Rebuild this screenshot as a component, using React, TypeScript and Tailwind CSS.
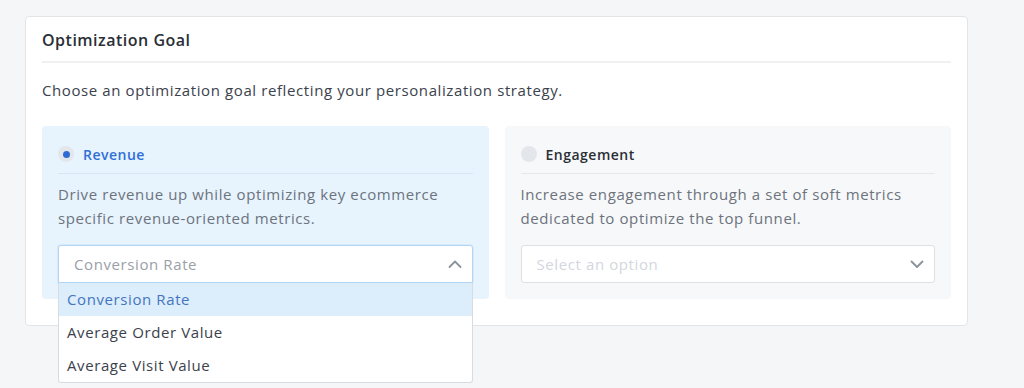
const options = ["Conversion Rate", "Average Order Value", "Average Visit Value"];

function Chevron({ up }: { up?: boolean }) {
  return (
    <svg width="14" height="14" viewBox="0 0 14 14" className="text-[#8a929d]">
      <path
        d={up ? "M1.5 10 L7 4.5 L12.5 10" : "M1.5 4.5 L7 10 L12.5 4.5"}
        fill="none"
        stroke="currentColor"
        strokeWidth="1.8"
        strokeLinecap="round"
        strokeLinejoin="round"
      />
    </svg>
  );
}

function Radio({ checked }: { checked: boolean }) {
  return (
    <span className="flex h-4 w-4 shrink-0 items-center justify-center rounded-full bg-[#e3e6eb]">
      {checked && <span className="h-[7px] w-[7px] rounded-full bg-[#2f6bd2]" />}
    </span>
  );
}

function GoalPanel({
  label,
  description,
  active,
  children,
}: {
  label: string;
  description: string[];
  active: boolean;
  children: React.ReactNode;
}) {
  return (
    <div
      className={`flex flex-col rounded-[4px] px-4 pt-4 pb-4 ${
        active ? "bg-[#e7f3fd]" : "bg-[#f7f8f9]"
      }`}
    >
      <div className="flex h-6 items-center gap-[9px]">
        <Radio checked={active} />
        <span
          className={`text-[14px] font-semibold tracking-[0.5px] ${
            active ? "text-[#2f6fd6]" : "text-[#2b2f36]"
          }`}
        >
          {label}
        </span>
      </div>
      <div className={`mt-[7px] h-px ${active ? "bg-[#d6e6f4]" : "bg-[#e6e8eb]"}`} />
      <p className="mt-[8px] text-[15px] leading-6 tracking-[0.6px] text-[#6c737d]">
        {description.map((line) => (
          <span key={line} className="block">
            {line}
          </span>
        ))}
      </p>
      <div className="mt-[15px]">{children}</div>
    </div>
  );
}

export default function App() {
  return (
    <div
      className="min-h-[388px] bg-[#f5f6f7] pl-[25px] pt-4"
      style={{ fontFamily: '"Open Sans", "Liberation Sans", sans-serif' }}
    >
      <div className="w-[943px] rounded-[4px] border border-[#e2e5e8] bg-white px-4 pt-[11px] pb-[26px]">
        <h2 className="border-b-2 border-[#eff0f2] pb-[9px] text-[16px] leading-6 font-semibold tracking-[0.5px] text-[#2a2e35]">
          Optimization Goal
        </h2>
        <p className="mt-[15px] text-[15px] leading-6 tracking-[0.6px] text-[#3b424c]">
          Choose an optimization goal reflecting your personalization strategy.
        </p>
        <div className="mt-6 grid grid-cols-2 gap-4">
          <GoalPanel
            label="Revenue"
            active
            description={[
              "Drive revenue up while optimizing key ecommerce",
              "specific revenue-oriented metrics.",
            ]}
          >
            <div className="relative">
              <div className="flex h-[38px] items-center justify-between rounded-t-[3px] border border-[#b3d5f5] bg-white pl-[15px] pr-[10px] shadow-[0_0_0_1px_#d9ebfb]">
                <span className="text-[15px] tracking-[0.6px] text-[#9aa0a8]">Conversion Rate</span>
                <Chevron up />
              </div>
              <ul className="absolute top-[38px] right-0 left-0 z-10 rounded-b-[3px] border border-t-0 border-[#d8dce1] bg-white">
                {options.map((o, i) => (
                  <li
                    key={o}
                    className={`flex h-[33px] items-center px-2 text-[15px] tracking-[0.6px] ${
                      i === 0 ? "bg-[#dcedfc] text-[#4476c0]" : "text-[#3b424c]"
                    }`}
                  >
                    {o}
                  </li>
                ))}
              </ul>
            </div>
          </GoalPanel>
          <GoalPanel
            label="Engagement"
            active={false}
            description={[
              "Increase engagement through a set of soft metrics",
              "dedicated to optimize the top funnel.",
            ]}
          >
            <div className="flex h-[38px] items-center justify-between rounded-[3px] border border-[#dde1e6] bg-white pl-[15px] pr-[10px]">
              <span className="text-[15px] tracking-[0.6px] text-[#d3d7dd]">Select an option</span>
              <Chevron />
            </div>
          </GoalPanel>
        </div>
      </div>
    </div>
  );
}
